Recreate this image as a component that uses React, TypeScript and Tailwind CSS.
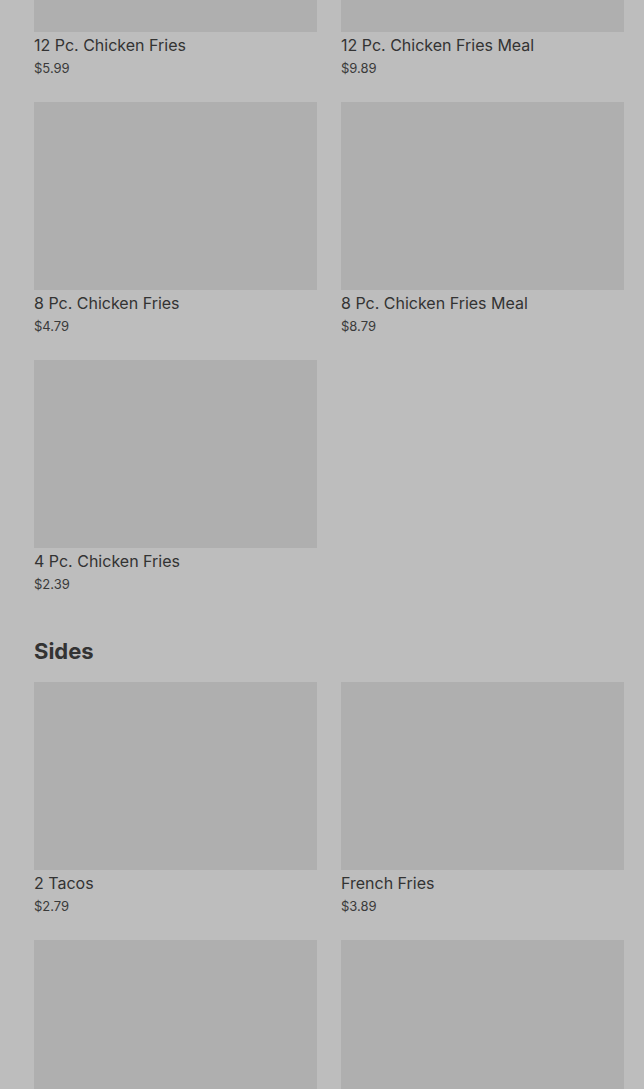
const chicken = [
  { name: "12 Pc. Chicken Fries", price: "$5.99" },
  { name: "12 Pc. Chicken Fries Meal", price: "$9.89" },
  { name: "8 Pc. Chicken Fries", price: "$4.79" },
  { name: "8 Pc. Chicken Fries Meal", price: "$8.79" },
  { name: "4 Pc. Chicken Fries", price: "$2.39" },
];

const sides = [
  { name: "2 Tacos", price: "$2.79" },
  { name: "French Fries", price: "$3.89" },
  { name: "Onion Rings", price: "$3.29" },
  { name: "Chicken Nuggets", price: "$2.49" },
];

function MenuCard({ name, price }: { name: string; price: string }) {
  return (
    <div className="flex flex-col">
      <div className="h-[188px] bg-[#afafaf]" />
      <p className="mt-[1px] text-[16px] leading-6 text-[#333333]">{name}</p>
      <p className="mt-[1px] text-[13px] leading-5 text-[#3a3a3a]">{price}</p>
    </div>
  );
}

export default function App() {
  return (
    <div
      className="min-h-screen w-full bg-[#bdbdbd] pb-10"
      style={{ fontFamily: "Inter, 'Noto Sans', sans-serif" }}
    >
      <div className="mt-[-156px] pl-[34px] pr-[20px]">
        <div className="grid grid-cols-2 gap-6">
          {chicken.map((item) => (
            <MenuCard key={item.name} {...item} />
          ))}
        </div>

        {/* Sides section */}
        <h2 className="mt-[43px] mb-[17px] text-[22px] font-bold leading-7 text-[#333333]">
          Sides
        </h2>
        <div className="grid grid-cols-2 gap-6">
          {sides.map((item) => (
            <MenuCard key={item.name} {...item} />
          ))}
        </div>
      </div>
    </div>
  );
}
